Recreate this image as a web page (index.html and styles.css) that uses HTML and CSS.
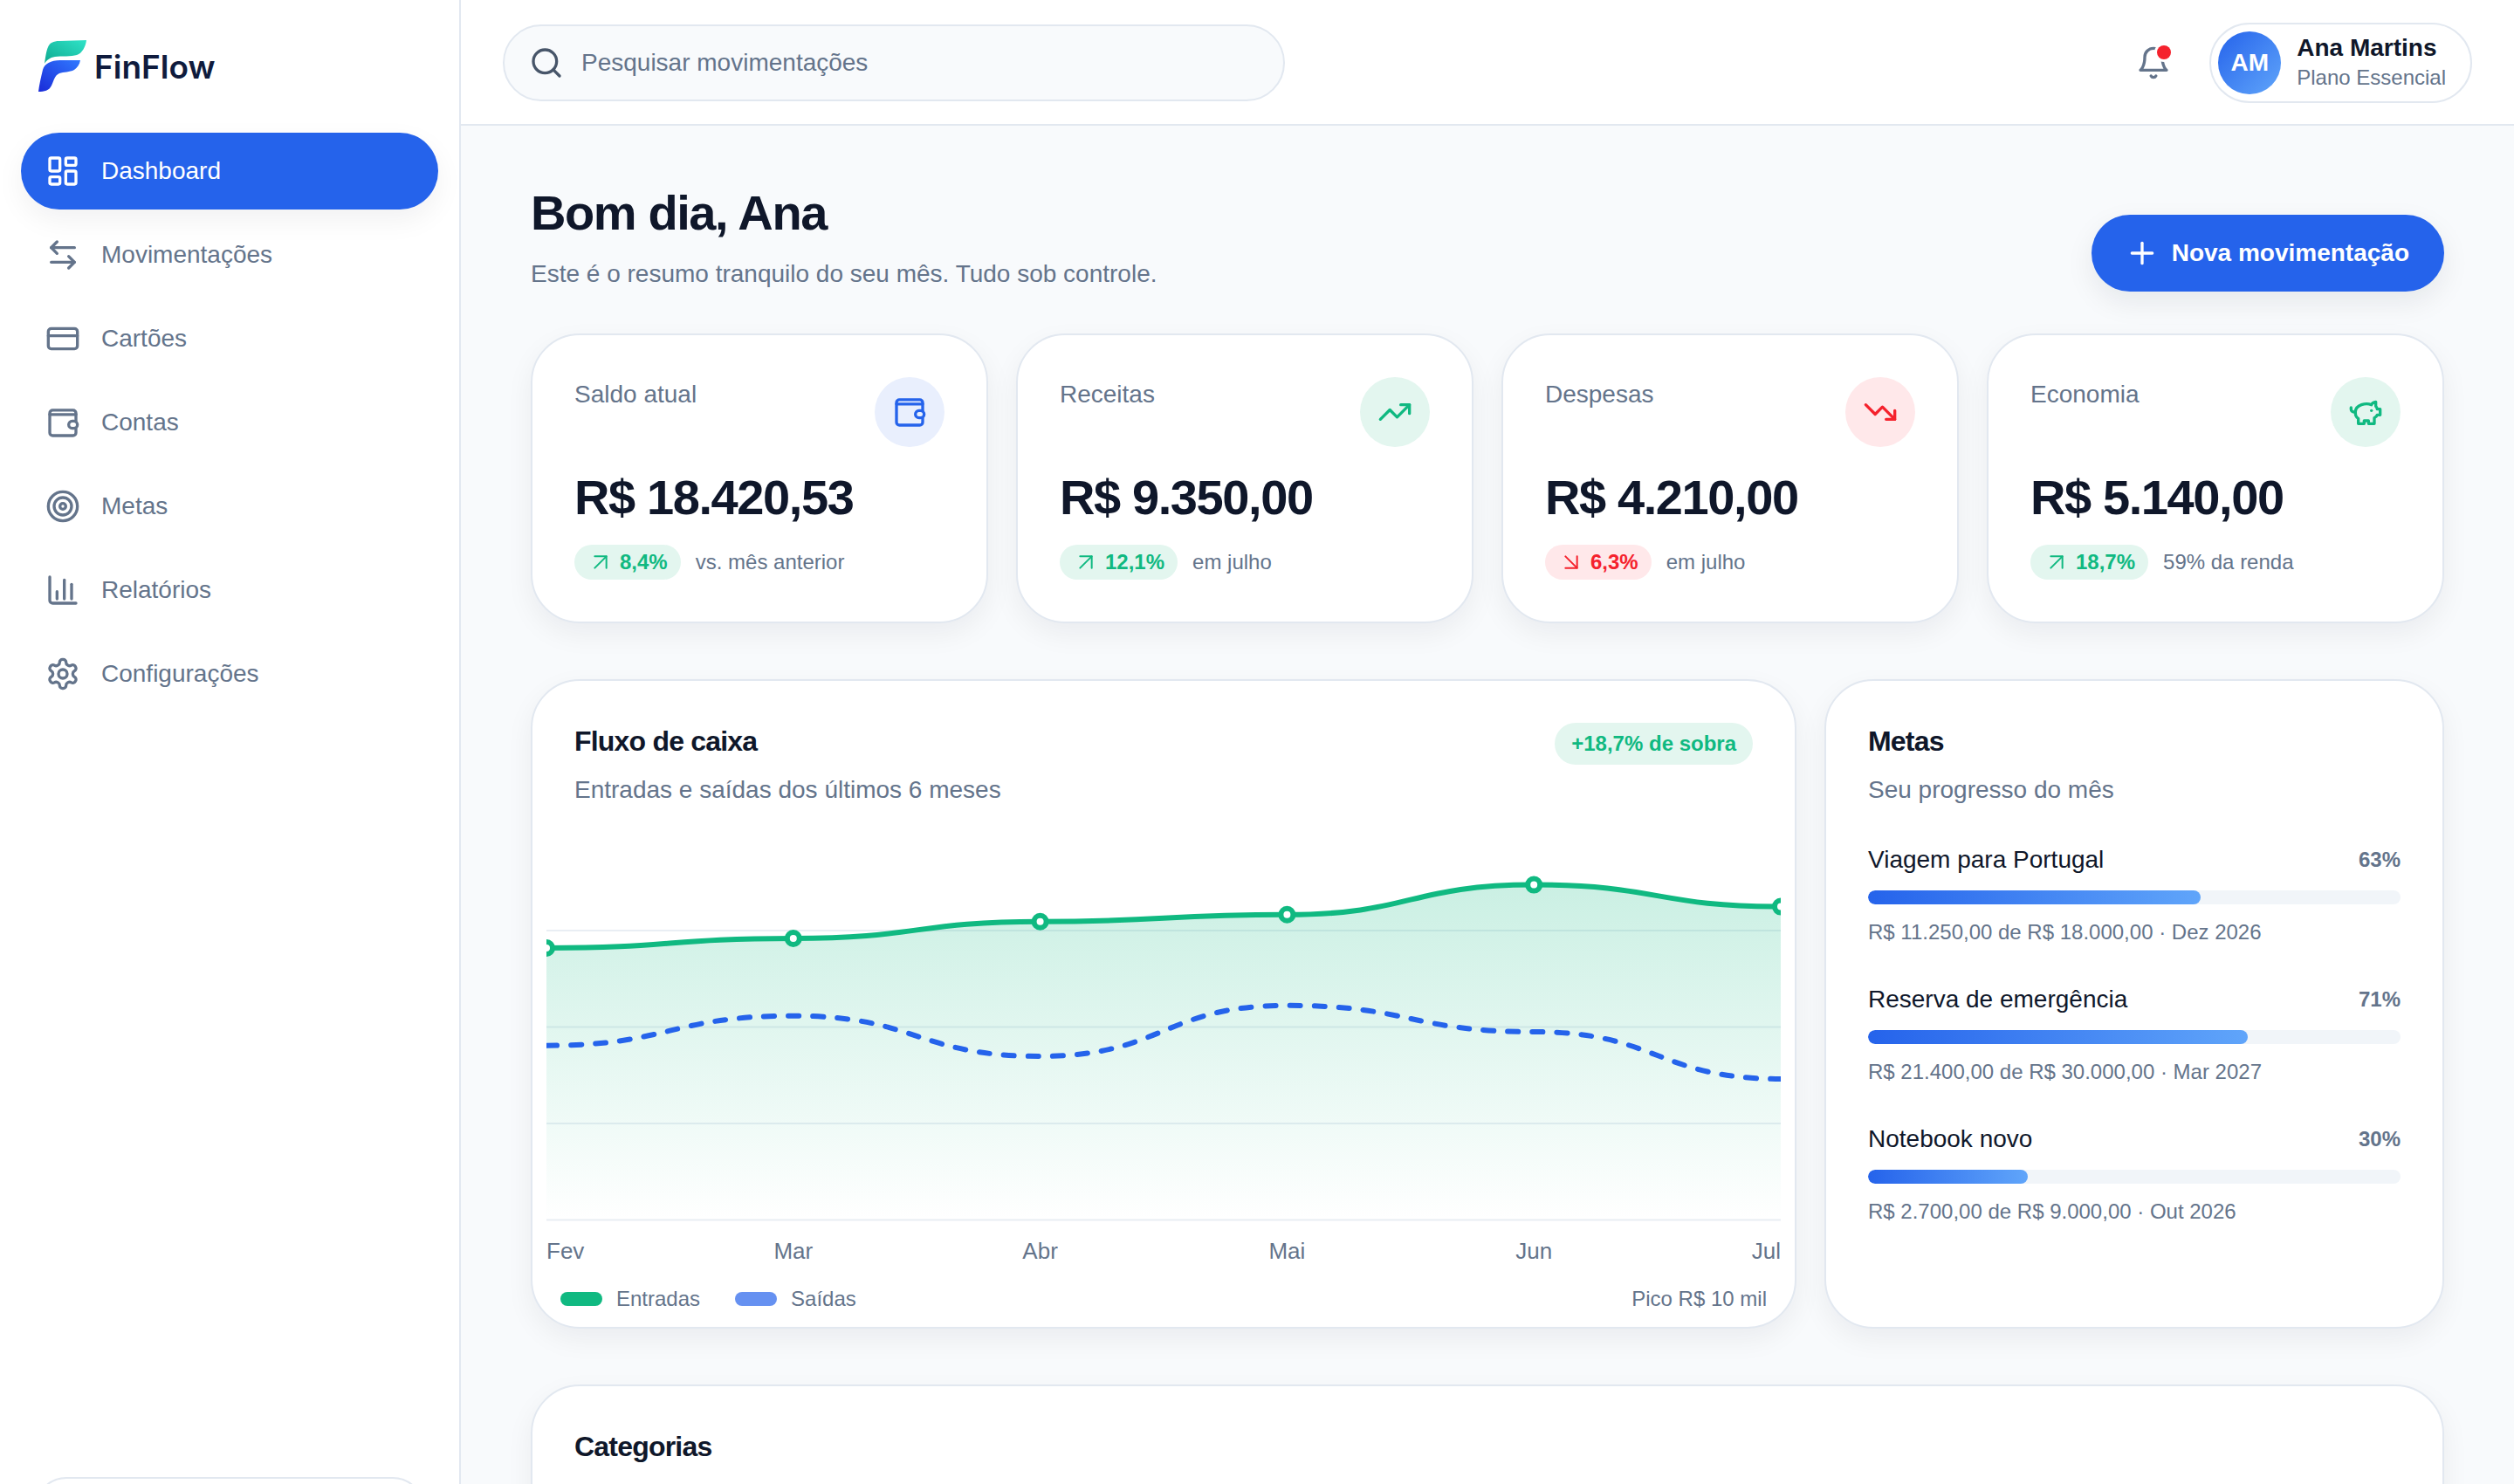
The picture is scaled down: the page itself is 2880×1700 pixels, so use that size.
FILE: index.html
```html
<!DOCTYPE html>
<html lang="pt-BR">
<head>
    <meta charset="UTF-8">
    <meta name="viewport" content="width=device-width, initial-scale=1.0">
    <title>FinFlow - Dashboard</title>
    <link rel="stylesheet" href="styles.css">
</head>
<body>
    <div class="app">
        <aside class="sidebar">
            <div class="logo">
                <svg class="logo-mark" viewBox="0 0 55 59">
                    <defs>
                        <linearGradient id="logoTop" x1="0" y1="1" x2="1" y2="0">
                            <stop offset="0" stop-color="#0fa98f"/>
                            <stop offset="1" stop-color="#2fe3c8"/>
                        </linearGradient>
                        <linearGradient id="logoBottom" x1="0" y1="1" x2="1" y2="0">
                            <stop offset="0" stop-color="#1a2bd8"/>
                            <stop offset="1" stop-color="#3079ff"/>
                        </linearGradient>
                    </defs>
                    <path fill="url(#logoTop)" d="M7 27C8 20 9 12 11 8 13 3 17 1 24 1L55 0C54 8 50 15 44 17 38 19 26 18 19 19 13 20 9 23 7 27Z"/>
                    <path fill="url(#logoBottom)" d="M48 23H25C14 23 7 27 5 34 3 42 1 51 0 59 7 59 12 58 15 52 18 46 18 41 24 38 29 36 36 37 41 34 45 31 47 28 48 23Z"/>
                </svg>
                <span class="logo-name">FinFlow</span>
            </div>

            <nav class="nav">
                <a class="nav-item active">
                    <svg class="icon" viewBox="0 0 24 24"><rect width="7" height="9" x="3" y="3" rx="1"/><rect width="7" height="5" x="14" y="3" rx="1"/><rect width="7" height="9" x="14" y="12" rx="1"/><rect width="7" height="5" x="3" y="16" rx="1"/></svg>
                    Dashboard
                </a>
                <a class="nav-item">
                    <svg class="icon" viewBox="0 0 24 24"><path d="M8 3 4 7l4 4"/><path d="M4 7h16"/><path d="m16 21 4-4-4-4"/><path d="M20 17H4"/></svg>
                    Movimentações
                </a>
                <a class="nav-item">
                    <svg class="icon" viewBox="0 0 24 24"><rect width="20" height="14" x="2" y="5" rx="2"/><path d="M2 10h20"/></svg>
                    Cartões
                </a>
                <a class="nav-item">
                    <svg class="icon" viewBox="0 0 24 24"><path d="M21 11V5.500a2 2 0 0 0-2-2H5a2 2 0 0 0-2 2V19a2 2 0 0 0 2 2h14a2 2 0 0 0 2-2v-3"/><path d="M3 6.500h18"/><rect width="6" height="5" x="16" y="11" rx="2.500"/></svg>
                    Contas
                </a>
                <a class="nav-item">
                    <svg class="icon" viewBox="0 0 24 24"><circle cx="12" cy="12" r="10"/><circle cx="12" cy="12" r="6"/><circle cx="12" cy="12" r="2"/></svg>
                    Metas
                </a>
                <a class="nav-item">
                    <svg class="icon" viewBox="0 0 24 24"><path d="M3 3v16a2 2 0 0 0 2 2h16"/><path d="M8 18v-5"/><path d="M13 18V5"/><path d="M18 18V8"/></svg>
                    Relatórios
                </a>
                <a class="nav-item">
                    <svg class="icon" viewBox="0 0 24 24"><path d="M12.220 2h-.44a2 2 0 0 0-2 2v.18a2 2 0 0 1-1 1.730l-.43.25a2 2 0 0 1-2 0l-.15-.08a2 2 0 0 0-2.730.73l-.22.38a2 2 0 0 0 .73 2.730l.15.1a2 2 0 0 1 1 1.720v.51a2 2 0 0 1-1 1.740l-.15.09a2 2 0 0 0-.73 2.730l.22.38a2 2 0 0 0 2.730.73l.15-.08a2 2 0 0 1 2 0l.43.25a2 2 0 0 1 1 1.730V20a2 2 0 0 0 2 2h.44a2 2 0 0 0 2-2v-.18a2 2 0 0 1 1-1.730l.43-.25a2 2 0 0 1 2 0l.15.08a2 2 0 0 0 2.730-.73l.22-.39a2 2 0 0 0-.73-2.730l-.15-.08a2 2 0 0 1-1-1.740v-.5a2 2 0 0 1 1-1.740l.15-.09a2 2 0 0 0 .73-2.730l-.22-.38a2 2 0 0 0-2.730-.73l-.15.08a2 2 0 0 1-2 0l-.43-.25a2 2 0 0 1-1-1.730V4a2 2 0 0 0-2-2z"/><circle cx="12" cy="12" r="3"/></svg>
                    Configurações
                </a>
            </nav>

            <div class="sidebar-card"></div>
        </aside>

        <div class="main">
            <header class="topbar">
                <div class="search">
                    <svg class="icon" viewBox="0 0 24 24"><circle cx="11" cy="11" r="8"/><path d="m21 21-4.300-4.300"/></svg>
                    <span>Pesquisar movimentações</span>
                </div>
                <div class="topbar-right">
                    <div class="bell">
                        <svg class="icon" viewBox="0 0 24 24"><path d="M6 8a6 6 0 0 1 12 0c0 7 3 9 3 9H3s3-2 3-9"/><path d="M10.300 21a1.940 1.940 0 0 0 3.400 0"/></svg>
                        <span class="bell-dot"></span>
                    </div>
                    <div class="profile">
                        <div class="avatar">AM</div>
                        <div class="profile-text">
                            <div class="profile-name">Ana Martins</div>
                            <div class="profile-plan">Plano Essencial</div>
                        </div>
                    </div>
                </div>
            </header>

            <main class="content">
                <div class="page-head">
                    <div>
                        <h1>Bom dia, Ana</h1>
                        <p class="page-sub">Este é o resumo tranquilo do seu mês. Tudo sob controle.</p>
                    </div>
                    <button class="new-btn">
                        <svg class="icon" viewBox="0 0 24 24"><path d="M5 12h14"/><path d="M12 5v14"/></svg>
                        Nova movimentação
                    </button>
                </div>

                <section class="stats">
                    <div class="card stat">
                        <div class="stat-head">
                            <span>Saldo atual</span>
                            <span class="stat-icon blue">
                                <svg class="icon" viewBox="0 0 24 24"><path d="M21 11V5.500a2 2 0 0 0-2-2H5a2 2 0 0 0-2 2V19a2 2 0 0 0 2 2h14a2 2 0 0 0 2-2v-3"/><path d="M3 6.500h18"/><rect width="6" height="5" x="16" y="11" rx="2.500"/></svg>
                            </span>
                        </div>
                        <div class="stat-value">R$ 18.420,53</div>
                        <div class="stat-foot">
                            <span class="delta up"><svg class="icon" viewBox="0 0 24 24"><path d="M7 7h10v10"/><path d="M7 17 17 7"/></svg>8,4%</span>
                            vs. mês anterior
                        </div>
                    </div>
                    <div class="card stat">
                        <div class="stat-head">
                            <span>Receitas</span>
                            <span class="stat-icon green">
                                <svg class="icon" viewBox="0 0 24 24"><path d="M22 7 13.500 15.500 8.500 10.500 2 17"/><path d="M16 7h6v6"/></svg>
                            </span>
                        </div>
                        <div class="stat-value">R$ 9.350,00</div>
                        <div class="stat-foot">
                            <span class="delta up"><svg class="icon" viewBox="0 0 24 24"><path d="M7 7h10v10"/><path d="M7 17 17 7"/></svg>12,1%</span>
                            em julho
                        </div>
                    </div>
                    <div class="card stat">
                        <div class="stat-head">
                            <span>Despesas</span>
                            <span class="stat-icon red">
                                <svg class="icon" viewBox="0 0 24 24"><path d="M22 17 13.500 8.500 8.500 13.500 2 7"/><path d="M16 17h6v-6"/></svg>
                            </span>
                        </div>
                        <div class="stat-value">R$ 4.210,00</div>
                        <div class="stat-foot">
                            <span class="delta down"><svg class="icon" viewBox="0 0 24 24"><path d="m7 7 10 10"/><path d="M17 7v10H7"/></svg>6,3%</span>
                            em julho
                        </div>
                    </div>
                    <div class="card stat">
                        <div class="stat-head">
                            <span>Economia</span>
                            <span class="stat-icon green">
                                <svg class="icon" viewBox="0 0 24 24"><path d="M19 5c-1.500 0-2.800 1.400-3 2-3.500-1.500-11-.3-11 5 0 1.800 0 3 2 4.500V20h4v-2h3v2h4v-4c1-.5 1.700-1 2-2h2v-4h-2c0-1-.5-1.500-1-2V5z"/><path d="M2 9v1c0 1.100.9 2 2 2h1"/><path d="M16 11h.01"/></svg>
                            </span>
                        </div>
                        <div class="stat-value">R$ 5.140,00</div>
                        <div class="stat-foot">
                            <span class="delta up"><svg class="icon" viewBox="0 0 24 24"><path d="M7 7h10v10"/><path d="M7 17 17 7"/></svg>18,7%</span>
                            59% da renda
                        </div>
                    </div>
                </section>

                <section class="panels">
                    <div class="card panel chart-panel">
                        <div class="panel-head">
                            <div>
                                <h2>Fluxo de caixa</h2>
                                <p class="panel-sub">Entradas e saídas dos últimos 6 meses</p>
                            </div>
                            <span class="surplus">+18,7% de sobra</span>
                        </div>
                        <svg class="chart" viewBox="0 0 1414 515">
                            <defs>
                                <linearGradient id="areaFill" x1="0" y1="0" x2="0" y2="1">
                                    <stop offset="0" stop-color="#10b981" stop-opacity="0.22"/>
                                    <stop offset="1" stop-color="#10b981" stop-opacity="0"/>
                                </linearGradient>
                            </defs>
                            <path class="grid-line" d="M0 121H1414M0 231.500H1414M0 342H1414M0 452.500H1414"/>
                            <path fill="url(#areaFill)" d="M0 141C141.400 141 141.400 130 282.800 130C424.200 130 424.200 110.700 565.600 110.700C707 110.700 707 102.800 848.400 102.800C989.800 102.800 989.800 68.600 1131.200 68.600C1272.600 68.600 1272.600 93.600 1414 93.600V452.500H0Z"/>
                            <path class="line-in" d="M0 141C141.400 141 141.400 130 282.800 130C424.200 130 424.200 110.700 565.600 110.700C707 110.700 707 102.800 848.400 102.800C989.800 102.800 989.800 68.600 1131.200 68.600C1272.600 68.600 1272.600 93.600 1414 93.600"/>
                            <path class="line-out" d="M0 252.700C141.400 252.700 141.400 218.700 282.800 218.700C424.200 218.700 424.200 265 565.600 265C707 265 707 206.800 848.400 206.800C989.800 206.800 989.800 237 1131.200 237C1272.600 237 1272.600 291 1414 291"/>
                            <circle class="dot" cx="0" cy="141" r="7"/>
                            <circle class="dot" cx="282.800" cy="130" r="7"/>
                            <circle class="dot" cx="565.600" cy="110.700" r="7"/>
                            <circle class="dot" cx="848.400" cy="102.800" r="7"/>
                            <circle class="dot" cx="1131.200" cy="68.600" r="7"/>
                            <circle class="dot" cx="1414" cy="93.600" r="7"/>
                            <text class="axis" x="0" y="497" text-anchor="start">Fev</text>
                            <text class="axis" x="282.800" y="497" text-anchor="middle">Mar</text>
                            <text class="axis" x="565.600" y="497" text-anchor="middle">Abr</text>
                            <text class="axis" x="848.400" y="497" text-anchor="middle">Mai</text>
                            <text class="axis" x="1131.200" y="497" text-anchor="middle">Jun</text>
                            <text class="axis" x="1414" y="497" text-anchor="end">Jul</text>
                        </svg>
                        <div class="legend">
                            <span class="legend-item"><i class="swatch in"></i>Entradas</span>
                            <span class="legend-item"><i class="swatch out"></i>Saídas</span>
                            <span class="legend-peak">Pico R$ 10 mil</span>
                        </div>
                    </div>

                    <div class="card panel">
                        <h2>Metas</h2>
                        <p class="panel-sub">Seu progresso do mês</p>
                        <div class="goals">
                            <div class="goal">
                                <div class="goal-row"><span class="goal-name">Viagem para Portugal</span><span class="goal-pct">63%</span></div>
                                <div class="goal-track"><div class="goal-fill" style="width: 62.5%"></div></div>
                                <div class="goal-detail">R$ 11.250,00 de R$ 18.000,00 · Dez 2026</div>
                            </div>
                            <div class="goal">
                                <div class="goal-row"><span class="goal-name">Reserva de emergência</span><span class="goal-pct">71%</span></div>
                                <div class="goal-track"><div class="goal-fill" style="width: 71.33%"></div></div>
                                <div class="goal-detail">R$ 21.400,00 de R$ 30.000,00 · Mar 2027</div>
                            </div>
                            <div class="goal">
                                <div class="goal-row"><span class="goal-name">Notebook novo</span><span class="goal-pct">30%</span></div>
                                <div class="goal-track"><div class="goal-fill" style="width: 30%"></div></div>
                                <div class="goal-detail">R$ 2.700,00 de R$ 9.000,00 · Out 2026</div>
                            </div>
                        </div>
                    </div>
                </section>

                <section class="card panel categories">
                    <h2>Categorias</h2>
                </section>
            </main>
        </div>
    </div>
</body>
</html>
```

FILE: styles.css
```css
* {
    box-sizing: border-box;
}
body {
    margin: 0;
    background-color: #f8fafc;
    color: #0f172a;
    font-family: "Liberation Sans", Arial, sans-serif;
    overflow: hidden;
}
h1, h2, p {
    margin: 0;
}
.app {
    display: flex;
    height: 100vh;
    overflow: hidden;
}
.icon {
    width: 40px;
    height: 40px;
    flex-shrink: 0;
    fill: none;
    stroke: currentColor;
    stroke-width: 2;
    stroke-linecap: round;
    stroke-linejoin: round;
}

/* sidebar */
.sidebar {
    width: 528px;
    height: 1800px;
    flex-shrink: 0;
    display: flex;
    flex-direction: column;
    padding: 0 24px;
    background-color: #fff;
    border-right: 2px solid #e2e8f0;
}
.logo {
    height: 152px;
    display: flex;
    align-items: center;
    gap: 9px;
    padding: 0 20px 2px;
}
.logo-mark {
    width: 55px;
    height: 59px;
}
.logo-name {
    font-family: Inter, sans-serif;
    font-size: 37px;
    font-weight: 600;
    color: #0f1b3d;
    margin-top: 2px;
}
.nav {
    display: flex;
    flex-direction: column;
    gap: 8px;
}
.nav-item {
    height: 88px;
    display: flex;
    align-items: center;
    gap: 24px;
    padding: 0 28px;
    border-radius: 44px;
    font-size: 28px;
    color: #64748b;
}
.nav-item.active {
    background-color: #2563eb;
    color: #fff;
    box-shadow: 0 12px 32px rgba(15, 23, 42, 0.06);
}
.sidebar-card {
    height: 108px;
    margin: auto 16px 0;
    flex-shrink: 0;
    border: 2px solid #e2e8f0;
    border-radius: 36px;
}

/* topbar */
.main {
    flex: 1;
    min-width: 0;
}
.topbar {
    height: 144px;
    display: flex;
    align-items: center;
    justify-content: space-between;
    padding: 2px 48px 0;
    background-color: #fff;
    border-bottom: 2px solid #e2e8f0;
}
.search {
    width: 896px;
    height: 88px;
    display: flex;
    align-items: center;
    gap: 20px;
    padding: 0 28px;
    background-color: #f8fafc;
    border: 2px solid #e2e8f0;
    border-radius: 44px;
    color: #64748b;
    font-size: 28px;
}
.search .icon {
    color: #475569;
}
.topbar-right {
    display: flex;
    align-items: center;
    gap: 32px;
}
.bell {
    position: relative;
    width: 64px;
    height: 64px;
    display: flex;
    align-items: center;
    justify-content: center;
    color: #64748b;
}
.bell-dot {
    position: absolute;
    top: 12px;
    right: 12px;
    width: 16px;
    height: 16px;
    border-radius: 50%;
    background-color: #f5222d;
    box-shadow: 0 0 0 3px #fff;
}
.profile {
    height: 92px;
    display: flex;
    align-items: center;
    gap: 18px;
    padding: 0 28px 0 8px;
    border: 2px solid #e2e8f0;
    border-radius: 46px;
    background-color: #fff;
}
.avatar {
    width: 72px;
    height: 72px;
    display: flex;
    align-items: center;
    justify-content: center;
    border-radius: 50%;
    background: linear-gradient(135deg, #2563eb, #60a5fa);
    color: #fff;
    font-size: 28px;
    font-weight: 700;
}
.profile-name {
    font-size: 28px;
    line-height: 34px;
    font-weight: 700;
}
.profile-plan {
    font-size: 24px;
    line-height: 34px;
    color: #64748b;
}

/* page */
.content {
    padding: 64px 80px 0;
}
.page-head {
    display: flex;
    align-items: flex-end;
    justify-content: space-between;
    margin-bottom: 48px;
}
h1 {
    font-size: 56px;
    line-height: 72px;
    font-weight: 700;
    letter-spacing: -1.4px;
}
.page-sub {
    margin-top: 14px;
    font-size: 28px;
    line-height: 40px;
    color: #64748b;
}
.new-btn {
    height: 88px;
    display: flex;
    align-items: center;
    gap: 14px;
    padding: 0 40px 0 38px;
    border: none;
    border-radius: 44px;
    background-color: #2563eb;
    color: #fff;
    font-family: inherit;
    font-size: 28px;
    font-weight: 700;
    box-shadow: 0 12px 32px rgba(15, 23, 42, 0.08);
}
.card {
    background-color: #fff;
    border: 2px solid #e2e8f0;
    border-radius: 56px;
    box-shadow: 0 12px 32px rgba(15, 23, 42, 0.06);
}

/* stat cards */
.stats {
    display: grid;
    grid-template-columns: repeat(4, 1fr);
    gap: 32px;
    margin-bottom: 64px;
}
.stat {
    padding: 48px;
}
.stat-head {
    display: flex;
    align-items: flex-start;
    justify-content: space-between;
    font-size: 28px;
    line-height: 40px;
    color: #64748b;
}
.stat-icon {
    width: 80px;
    height: 80px;
    display: flex;
    align-items: center;
    justify-content: center;
    border-radius: 50%;
}
.stat-icon.blue {
    background-color: #e9effd;
    color: #2563eb;
}
.stat-icon.green {
    background-color: #e3f6ef;
    color: #10b981;
}
.stat-icon.red {
    background-color: #ffe8ea;
    color: #f5222d;
}
.stat-value {
    margin-top: 26px;
    font-size: 56px;
    line-height: 64px;
    font-weight: 700;
    letter-spacing: -1.4px;
}
.stat-foot {
    margin-top: 22px;
    display: flex;
    align-items: center;
    gap: 17px;
    font-size: 24px;
    color: #64748b;
}
.delta {
    height: 40px;
    display: flex;
    align-items: center;
    gap: 6px;
    padding: 0 15px 0 14px;
    border-radius: 20px;
    font-weight: 700;
}
.delta .icon {
    width: 32px;
    height: 32px;
    stroke-width: 1.5;
}
.delta.up {
    background-color: #e3f6ef;
    color: #10b981;
}
.delta.down {
    background-color: #ffe8ea;
    color: #f5222d;
}

/* panels */
.panels {
    display: grid;
    grid-template-columns: minmax(0, 1fr) 710px;
    gap: 32px;
    margin-bottom: 64px;
}
.panel {
    padding: 48px;
}
.chart-panel {
    padding-bottom: 12px;
}
.panel-head {
    display: flex;
    align-items: flex-start;
    justify-content: space-between;
}
h2 {
    font-size: 32px;
    line-height: 42px;
    font-weight: 700;
    letter-spacing: -0.8px;
}
.panel-sub {
    margin-top: 15px;
    font-size: 28px;
    line-height: 40px;
    color: #64748b;
}
.surplus {
    height: 48px;
    display: flex;
    align-items: center;
    padding: 0 19px;
    border-radius: 24px;
    background-color: #e3f6ef;
    color: #10b981;
    font-size: 24px;
    font-weight: 700;
}
.chart {
    display: block;
    width: 1414px;
    height: 515px;
    margin: 20px -32px 0;
}
.grid-line {
    fill: none;
    stroke: #e9eef4;
    stroke-width: 2;
}
.line-in {
    fill: none;
    stroke: #10b981;
    stroke-width: 6;
}
.line-out {
    fill: none;
    stroke: #2563eb;
    stroke-width: 6;
    stroke-dasharray: 12 16;
    stroke-linecap: round;
}
.dot {
    fill: #fff;
    stroke: #10b981;
    stroke-width: 6;
}
.axis {
    fill: #64748b;
    font-size: 26px;
}
.legend {
    height: 40px;
    margin: 8px -16px 0;
    display: flex;
    align-items: center;
    gap: 40px;
    font-size: 24px;
    color: #64748b;
}
.legend-item {
    display: flex;
    align-items: center;
    gap: 16px;
}
.swatch {
    width: 48px;
    height: 16px;
    border-radius: 8px;
}
.swatch.in {
    background-color: #10b981;
}
.swatch.out {
    background-color: #6691f1;
}
.legend-peak {
    margin-left: auto;
}

/* goals */
.goals {
    margin-top: 40px;
    display: flex;
    flex-direction: column;
    gap: 39px;
}
.goal-row {
    display: flex;
    align-items: center;
    justify-content: space-between;
    line-height: 40px;
}
.goal-name {
    font-size: 28px;
}
.goal-pct {
    font-size: 24px;
    font-weight: 700;
    color: #64748b;
}
.goal-track {
    height: 16px;
    margin-top: 15px;
    border-radius: 8px;
    background-color: #f1f5f9;
    overflow: hidden;
}
.goal-fill {
    height: 100%;
    border-radius: 8px;
    background: linear-gradient(90deg, #2563eb, #60a5fa);
}
.goal-detail {
    margin-top: 14px;
    font-size: 24px;
    line-height: 36px;
    color: #64748b;
}
.categories {
    height: 400px;
}
```
